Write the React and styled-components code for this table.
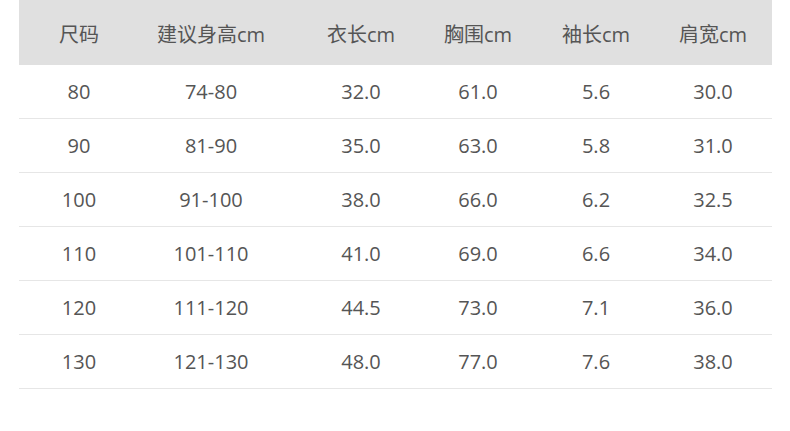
import React from "react"
import styled, { createGlobalStyle } from "styled-components"

const GlobalStyle = createGlobalStyle`
  body {
    margin: 0;
    background: #fff;
    font-family: "Open Sans", "Noto Sans CJK SC", sans-serif;
  }
`

const Page = styled.div`
  width: 790px;
  height: 431px;
  padding: 0 18px 0 19px;
  box-sizing: border-box;
`

const Row = styled.div`
  display: grid;
  grid-template-columns: 78px 186px 114px 120px 116px 118px;
  padding-left: 21px;
  align-items: center;
  height: ${p => (p.$head ? "65px" : "53px")};
  background: ${p => (p.$head ? "#e0e0e0" : "transparent")};
  border-bottom: ${p => (p.$head ? "none" : "1px solid #e6e6e6")};
`

const Cell = styled.div`
  text-align: center;
  font-size: 20px;
  color: #555;
  white-space: nowrap;
  letter-spacing: ${p => (p.$head ? "0" : "0")};
  padding-top: ${p => (p.$head ? "2px" : "0")};
`

const head = ["尺码", "建议身高cm", "衣长cm", "胸围cm", "袖长cm", "肩宽cm"]

const rows = [
  ["80", "74-80", "32.0", "61.0", "5.6", "30.0"],
  ["90", "81-90", "35.0", "63.0", "5.8", "31.0"],
  ["100", "91-100", "38.0", "66.0", "6.2", "32.5"],
  ["110", "101-110", "41.0", "69.0", "6.6", "34.0"],
  ["120", "111-120", "44.5", "73.0", "7.1", "36.0"],
  ["130", "121-130", "48.0", "77.0", "7.6", "38.0"],
]

const App = () => (
  <Page>
    <GlobalStyle />
    <Row $head>
      {head.map(h => (
        <Cell key={h} $head>
          {h}
        </Cell>
      ))}
    </Row>
    {rows.map(r => (
      <Row key={r[0]}>
        {r.map((v, i) => (
          <Cell key={i}>{v}</Cell>
        ))}
      </Row>
    ))}
  </Page>
)

export default App
